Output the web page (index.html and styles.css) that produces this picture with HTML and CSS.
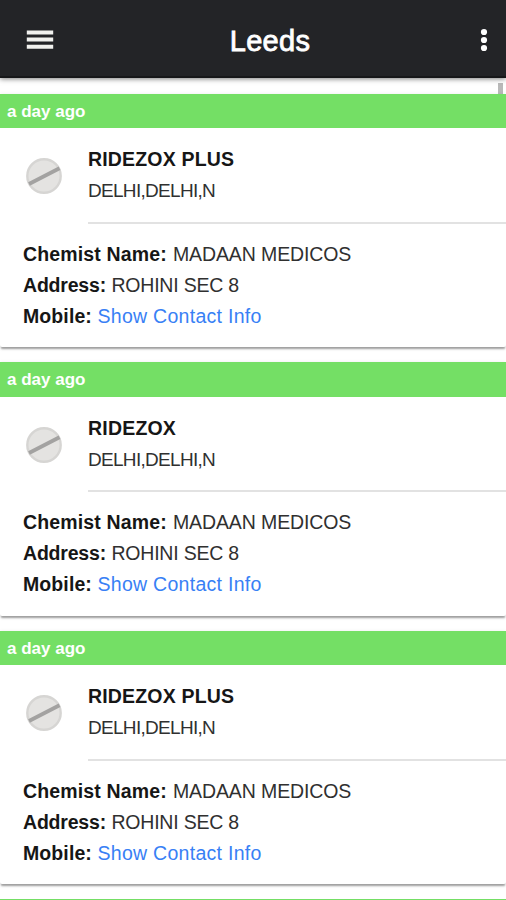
FILE: index.html
```
<!DOCTYPE html>
<html lang="en">
<head>
<meta charset="utf-8">
<title>Leeds</title>
<link rel="stylesheet" href="styles.css">
</head>
<body>
<header class="topbar">
  <svg class="menu" width="28" height="22" viewBox="0 0 28 22"><path d="M.8 3.5h26.4M.8 10.6h26.4M.8 17.7h26.4" stroke="#f1f1ee" stroke-width="4"/></svg>
  <h1>Leeds</h1>
  <svg class="more" width="8" height="24" viewBox="0 0 8 24" fill="#fff"><circle cx="4" cy="4" r="3.1"/><circle cx="4" cy="12" r="3.1"/><circle cx="4" cy="20" r="3.1"/></svg>
</header>
<main class="list">
  <div class="scrollbar"></div>
  <article class="card">
    <div class="time"><span>a day ago</span></div>
    <div class="product">
      <svg class="pill" width="38" height="38" viewBox="0 0 38 38"><circle cx="19" cy="19" r="16.7" fill="#e4e3e1" stroke="#d6d5d3" stroke-width="2.4"/><path d="M4 27L34.5 11.2" stroke="#a3a2a1" stroke-width="3.8"/></svg>
      <div class="summary"><h2><span class="name-long">RIDEZOX PLUS</span></h2><p><span class="place">DELHI,DELHI,N</span></p></div>
    </div>
    <div class="details">
      <p><b class="l1">Chemist Name:</b><span class="v1">MADAAN MEDICOS</span></p>
      <p><b class="l2">Address:</b><span class="v2">ROHINI SEC 8</span></p>
      <p><b class="l3">Mobile:</b><a class="v3">Show Contact Info</a></p>
    </div>
  </article>
  <article class="card">
    <div class="time"><span>a day ago</span></div>
    <div class="product">
      <svg class="pill" width="38" height="38" viewBox="0 0 38 38"><circle cx="19" cy="19" r="16.7" fill="#e4e3e1" stroke="#d6d5d3" stroke-width="2.4"/><path d="M4 27L34.5 11.2" stroke="#a3a2a1" stroke-width="3.8"/></svg>
      <div class="summary"><h2><span class="name-short">RIDEZOX</span></h2><p><span class="place">DELHI,DELHI,N</span></p></div>
    </div>
    <div class="details">
      <p><b class="l1">Chemist Name:</b><span class="v1">MADAAN MEDICOS</span></p>
      <p><b class="l2">Address:</b><span class="v2">ROHINI SEC 8</span></p>
      <p><b class="l3">Mobile:</b><a class="v3">Show Contact Info</a></p>
    </div>
  </article>
  <article class="card">
    <div class="time"><span>a day ago</span></div>
    <div class="product">
      <svg class="pill" width="38" height="38" viewBox="0 0 38 38"><circle cx="19" cy="19" r="16.7" fill="#e4e3e1" stroke="#d6d5d3" stroke-width="2.4"/><path d="M4 27L34.5 11.2" stroke="#a3a2a1" stroke-width="3.8"/></svg>
      <div class="summary"><h2><span class="name-long">RIDEZOX PLUS</span></h2><p><span class="place">DELHI,DELHI,N</span></p></div>
    </div>
    <div class="details">
      <p><b class="l1">Chemist Name:</b><span class="v1">MADAAN MEDICOS</span></p>
      <p><b class="l2">Address:</b><span class="v2">ROHINI SEC 8</span></p>
      <p><b class="l3">Mobile:</b><a class="v3">Show Contact Info</a></p>
    </div>
  </article>
  <div class="next-card"></div>
</main>
</body>
</html>
```
FILE: styles.css
```
* { box-sizing: border-box; margin: 0; padding: 0; }
body {
  height: 900px;
  overflow: hidden;
  background: #fff;
  color: #161616;
  font-family: "Liberation Sans", Arial, sans-serif;
}
.topbar {
  position: relative;
  z-index: 2;
  display: grid;
  grid-template-columns: 88px 1fr 54px;
  align-items: center;
  height: 78px;
  padding: 3px 0 0;
  background: #232427;
  border-bottom: 2px solid #17181a;
  box-shadow: 0 1px 5px rgba(0, 0, 0, .5);
}
.menu { justify-self: start; margin-left: 26px; }
.more { justify-self: end; margin-right: 18px; }
.topbar h1 {
  padding-top: 3px;
  text-align: center;
  color: #fff;
  font-size: 29px;
  line-height: 34px;
  font-weight: 400;
  letter-spacing: .3px;
  -webkit-text-stroke: .8px #fff;
}
.list { position: relative; height: 822px; padding-top: 15.5px; overflow: hidden; }
.scrollbar {
  position: absolute;
  top: 5px;
  right: 3px;
  width: 5px;
  height: 11px;
  background: #b9b9b9;
}
.card {
  position: relative;
  height: 253.5px;
  margin-bottom: 15px;
  background: #fff;
  border-radius: 2px;
  box-shadow: 0 3px 2px -1px rgba(0, 0, 0, .33), 0 1px 4px rgba(0, 0, 0, .12);
}
.time, .next-card { background: #74df65; }
.next-card { height: 1px; }
.time {
  height: 34.5px;
  padding-left: 7px;
  color: #fff;
  font-size: 17px;
  line-height: 35px;
  font-weight: 700;
}
.product { display: flex; height: 95.5px; padding-left: 25px; }
.pill { margin-top: 29px; flex: none; }
.summary {
  flex: 1;
  margin-left: 25px;
  padding-top: 16px;
  border-bottom: 2px solid #e2e2e2;
}
.summary h2, .summary p { height: 31px; font-size: 19px; line-height: 31px; white-space: nowrap; }
.summary h2 { font-size: 19.5px; }
.details { padding: 15px 0 0 23px; }
.details p {
  display: flex;
  height: 31px;
  font-size: 19.5px;
  line-height: 31px;
  white-space: nowrap;
}
.details b { flex: none; }
.place, .details span { color: #303030; }
.name-long { letter-spacing: .17px; }
.name-short { letter-spacing: .2px; }
.place { letter-spacing: -.7px; }
.l1 { width: 150px; letter-spacing: .15px; }
.l2 { width: 88.5px; letter-spacing: -.2px; }
.l3 { width: 74.5px; letter-spacing: .1px; }
.v1 { letter-spacing: -.12px; }
.v2 { letter-spacing: -.22px; }
.v3 { color: #3880f5; letter-spacing: .28px; }
```
